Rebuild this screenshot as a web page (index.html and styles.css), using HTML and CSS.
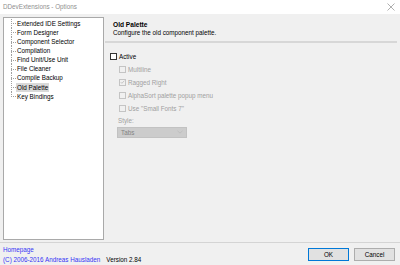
FILE: index.html
```html
<!DOCTYPE html>
<html>
<head>
<meta charset="utf-8">
<link rel="stylesheet" href="styles.css">
</head>
<body>
<div class="window">
  <div class="titlebar">
    <span class="title">DDevExtensions - Options</span>
    <svg class="close" width="8" height="8" viewBox="0 0 8 8"><path d="M0.5 0.5L7.5 7.5M7.5 0.5L0.5 7.5" stroke="#9a9a9a" stroke-width="0.8" fill="none"/></svg>
  </div>
  <div class="main">
    <ul class="tree">
      <li><span>Extended IDE Settings</span></li>
      <li><span>Form Designer</span></li>
      <li><span>Component Selector</span></li>
      <li><span>Compilation</span></li>
      <li><span>Find Unit/Use Unit</span></li>
      <li><span>File Cleaner</span></li>
      <li><span>Compile Backup</span></li>
      <li><span class="selected">Old Palette</span></li>
      <li class="last"><span>Key Bindings</span></li>
    </ul>
    <div class="panel">
      <div class="header">
        <div class="h-title">Old Palette</div>
        <div class="h-desc">Configure the old component palette.</div>
      </div>
      <div class="content">
        <label class="check"><span class="box"></span>Active</label>
        <div class="sub">
          <label class="check dis"><span class="box"></span>Multiline</label>
          <label class="check dis"><span class="box checked"><svg width="6" height="6" viewBox="0 0 6 6"><path d="M0.8 3.1L2.3 4.6L5.2 1.4" stroke="#b0b0b0" stroke-width="0.8" fill="none"/></svg></span>Ragged Right</label>
          <label class="check dis"><span class="box"></span>AlphaSort palette popup menu</label>
          <label class="check dis"><span class="box"></span>Use "Small Fonts 7"</label>
        </div>
        <div class="style-label">Style:</div>
        <div class="combo"><span>Tabs</span><svg width="6" height="4" viewBox="0 0 6 4"><path d="M0.5 0.8L3 3.2L5.5 0.8" stroke="#b8b8b8" stroke-width="0.7" fill="none"/></svg></div>
      </div>
    </div>
  </div>
  <div class="footer">
    <div class="info">
      <a class="link">Homepage</a>
      <div class="copy"><a class="link">(C) 2006-2016 Andreas Hausladen</a><span class="version">Version 2.84</span></div>
    </div>
    <div class="buttons">
      <button class="btn default">OK</button>
      <button class="btn">Cancel</button>
    </div>
  </div>
</div>
</body>
</html>
```
FILE: styles.css
```css
* { box-sizing: border-box; }
html, body { margin: 0; padding: 0; }
body {
  width: 400px;
  height: 265px;
  background: #f0f0f0;
  font-family: "Liberation Sans", Arial, sans-serif;
  font-size: 6.3px;
  color: #000;
  overflow: hidden;
}
.window { display: flex; flex-direction: column; height: 265px; }
.titlebar {
  height: 14px;
  background: #fff;
  display: flex;
  align-items: center;
  justify-content: space-between;
  padding: 0 5px 0 3px;
}
.title { color: #8f8f8f; font-size: 6.3px; }
.close { display: block; }
.main {
  display: flex;
  height: 229px;
  padding: 3px 3px 0 3px;
}
.tree {
  list-style: none;
  margin: 0;
  padding: 1px 0 0 0;
  width: 101px;
  height: 223px;
  background: #fff;
  border: 1px solid #a9a9a9;
}
.tree li {
  height: 9.1px;
  line-height: 9.1px;
  padding-left: 12px;
  background:
    repeating-linear-gradient(to bottom, #a0a0a0 0 1px, transparent 1px 2px) 7px 0 / 1px 100% no-repeat,
    repeating-linear-gradient(to right, #a0a0a0 0 1px, transparent 1px 2px) 7px 4.5px / 6px 1px no-repeat;
}
.tree li.last {
  background:
    repeating-linear-gradient(to bottom, #a0a0a0 0 1px, transparent 1px 2px) 7px 0 / 1px 5px no-repeat,
    repeating-linear-gradient(to right, #a0a0a0 0 1px, transparent 1px 2px) 7px 4.5px / 6px 1px no-repeat;
}
.tree li span { display: inline-block; padding: 0 1px; }
.tree li span.selected { background: #d9d9d9; }
.panel {
  flex: 1;
  display: flex;
  flex-direction: column;
  margin-left: 1px;
}
.header {
  height: 26px;
  padding: 4px 0 0 8px;
  border-bottom: 2px solid #d7d7d7;
}
.h-title { font-weight: bold; font-size: 6.6px; line-height: 8px; }
.h-desc { line-height: 8px; }
.content { padding: 7px 0 0 5px; }
.check {
  display: flex;
  align-items: center;
  height: 13px;
}
.box {
  width: 7px;
  height: 7px;
  border: 1px solid #333;
  background: #fff;
  margin-right: 2px;
  display: flex;
  align-items: center;
  justify-content: center;
}
.content > .check { margin-top: 0; }
.sub { padding-left: 9px; }
.check.dis { color: #a0a0a0; }
.check.dis .box { border-color: #c4c4c4; background: #f0f0f0; }
.style-label { color: #a0a0a0; padding-left: 8px; margin-top: 2px; line-height: 8px; }
.combo {
  margin: 2px 0 0 7px;
  width: 70px;
  height: 11px;
  background: #cccccc;
  border: 1px solid #c2c2c2;
  display: flex;
  align-items: center;
  justify-content: space-between;
  padding: 0 3px 0 3px;
  color: #838383;
}
.combo svg { display: block; }
.footer {
  flex: 1;
  border-top: 1px solid #d4d4d4;
  margin-top: 1px;
  display: flex;
  justify-content: space-between;
  padding: 2px 5px 0 3px;
}
.info { display: flex; flex-direction: column; }
.link { color: #3535f5; line-height: 10px; }
.copy { display: flex; }
.version { margin-left: 6px; line-height: 10px; }
.buttons { display: flex; gap: 5px; padding-top: 3px; }
.btn {
  width: 41px;
  height: 13px;
  padding: 0;
  margin: 0;
  font-family: inherit;
  font-size: 6.3px;
  background: #e1e1e1;
  border: 1px solid #adadad;
  color: #000;
}
.btn.default { border-color: #0078d7; }
```
